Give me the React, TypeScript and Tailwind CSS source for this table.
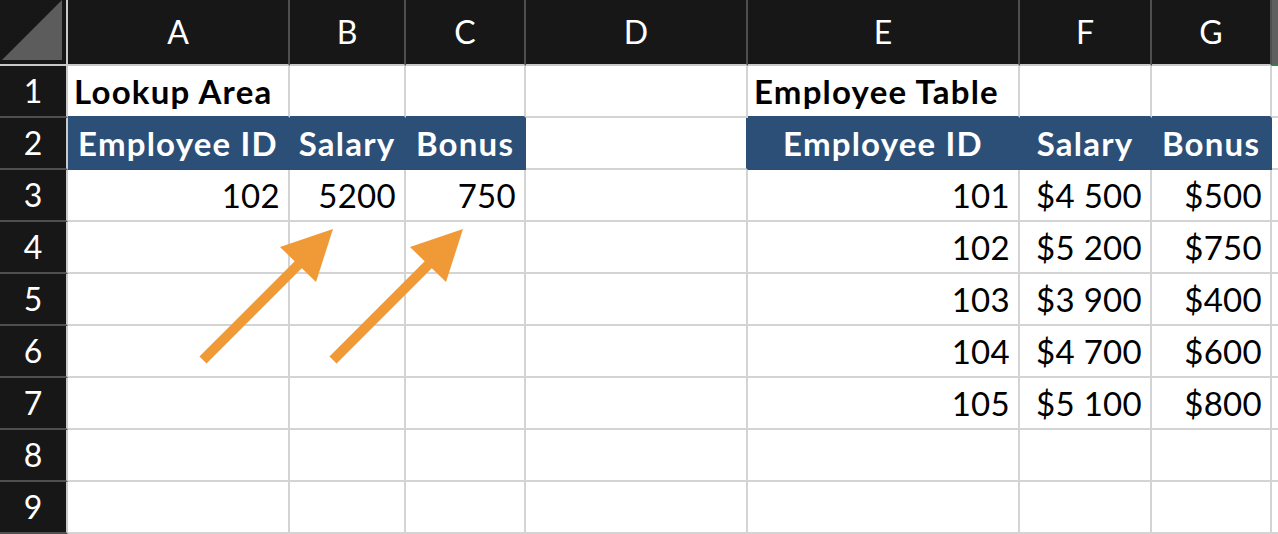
import React from "react";

type CellSpec = {
  text?: string;
  kind?: "title" | "head" | "num";
  blue?: boolean;
  bBlue?: boolean;
  rBlue?: boolean;
};

const COL_W = [
  "w-[222px]",
  "w-[116px]",
  "w-[120px]",
  "w-[222px]",
  "w-[272px]",
  "w-[132px]",
  "w-[120px]",
];
const LETTERS = ["A", "B", "C", "D", "E", "F", "G"];

const e: CellSpec = {};

const ROWS: CellSpec[][] = [
  [
    { text: "Lookup Area", kind: "title", bBlue: true },
    { bBlue: true },
    { bBlue: true },
    {},
    { text: "Employee Table", kind: "title", bBlue: true },
    { bBlue: true },
    { bBlue: true },
  ],
  [
    { text: "Employee ID", kind: "head", blue: true },
    { text: "Salary", kind: "head", blue: true },
    { text: "Bonus", kind: "head", blue: true },
    { rBlue: true },
    { text: "Employee ID", kind: "head", blue: true },
    { text: "Salary", kind: "head", blue: true },
    { text: "Bonus", kind: "head", blue: true },
  ],
  [
    { text: "102", kind: "num" },
    { text: "5200", kind: "num" },
    { text: "750", kind: "num" },
    e,
    { text: "101", kind: "num" },
    { text: "$4 500", kind: "num" },
    { text: "$500", kind: "num" },
  ],
  [e, e, e, e, { text: "102", kind: "num" }, { text: "$5 200", kind: "num" }, { text: "$750", kind: "num" }],
  [e, e, e, e, { text: "103", kind: "num" }, { text: "$3 900", kind: "num" }, { text: "$400", kind: "num" }],
  [e, e, e, e, { text: "104", kind: "num" }, { text: "$4 700", kind: "num" }, { text: "$600", kind: "num" }],
  [e, e, e, e, { text: "105", kind: "num" }, { text: "$5 100", kind: "num" }, { text: "$800", kind: "num" }],
  [e, e, e, e, e, e, e],
  [e, e, e, e, e, e, e],
];

function Cell({ spec, w }: { spec: CellSpec; w: string }) {
  const cls = [
    w,
    "h-[52px] shrink-0 flex items-center border-r-2 border-b-2 overflow-visible whitespace-nowrap text-[33px]",
    spec.blue ? "bg-[#2c4f78]" : "bg-white",
    spec.blue || spec.rBlue ? "border-r-[#2c4f78]" : "border-r-[#d4d4d4]",
    spec.blue || spec.bBlue ? "border-b-[#2c4f78]" : "border-b-[#d4d4d4]",
    spec.kind === "title" ? "justify-start pl-[6px] font-bold tracking-[1.2px] text-black" : "",
    spec.kind === "head" ? "justify-center font-bold tracking-[1.2px] text-white" : "",
    spec.kind === "num" ? "justify-end pr-[8px] tracking-[0.3px] text-black" : "",
  ].join(" ");
  return <div className={cls}>{spec.text}</div>;
}

function Arrow({ dx }: { dx: number }) {
  return (
    <g transform={`translate(${dx} 0)`} fill="#f09a37" stroke="#f09a37">
      <line x1="203" y1="360" x2="303" y2="260" strokeWidth="10" />
      <polygon points="333,229 280,247 316,282" stroke="none" />
    </g>
  );
}

export default function App() {
  return (
    <div
      className="relative w-[1278px] h-[534px] overflow-hidden bg-white text-[32px] leading-none"
      style={{ fontFamily: "Lato, 'Open Sans', sans-serif" }}
    >
      {/* column headers */}
      <div className="flex h-[66px]">
        <div className="w-[68px] h-[66px] shrink-0 bg-[#171717] border-r-2 border-b-2 border-r-[#c9c9c9] border-b-[#c9c9c9] flex items-end justify-end pr-[4px] pb-[4px]">
          <svg width="60" height="60" viewBox="0 0 60 60">
            <polygon points="0,60 60,0 60,60" fill="#5c5c5c" />
          </svg>
        </div>
        {LETTERS.map((l, i) => (
          <div
            key={l}
            className={`${COL_W[i]} h-[66px] shrink-0 bg-[#171717] border-r-2 border-b-2 border-r-[#4f4f4f] border-b-[#c9c9c9] flex items-center justify-center text-white`}
          >
            {l}
          </div>
        ))}
        <div className="flex-1 h-[66px] bg-[#5f5f5f] border-b-2 border-b-[#3d7a55]" />
      </div>
      {/* rows */}
      {ROWS.map((row, r) => (
        <div key={r} className="flex h-[52px]">
          <div className="w-[68px] h-[52px] shrink-0 bg-[#171717] border-r-2 border-b-2 border-r-[#c9c9c9] border-b-[#4f4f4f] flex items-center justify-center text-white">
            {r + 1}
          </div>
          {row.map((spec, c) => (
            <Cell key={c} spec={spec} w={COL_W[c]} />
          ))}
          <div className="flex-1 h-[52px] bg-white border-b-2 border-b-[#d4d4d4]" />
        </div>
      ))}
      <svg
        className="absolute left-0 top-0 pointer-events-none"
        width="1278"
        height="534"
        viewBox="0 0 1278 534"
      >
        <Arrow dx={0} />
        <Arrow dx={130} />
      </svg>
    </div>
  );
}
